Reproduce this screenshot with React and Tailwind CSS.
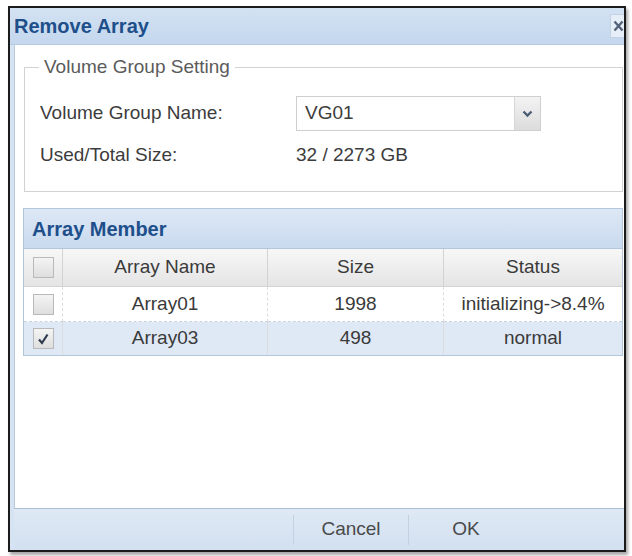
import React from 'react';

const rows = [
  { name: 'Array01', size: '1998', status: 'initializing->8.4%', checked: false },
  { name: 'Array03', size: '498', status: 'normal', checked: true },
];

function CheckBox({ checked }) {
  return (
    <div className="w-[21px] h-[21px] border border-[#b9b9b9] bg-gradient-to-b from-[#f4f4f4] to-[#dedede] flex items-center justify-center">
      {checked && (
        <svg width="14" height="14" viewBox="0 0 14 14">
          <path d="M3 7.5 L6 11 L11.5 2.5" fill="none" stroke="#2f3b4f" strokeWidth="2.2" />
        </svg>
      )}
    </div>
  );
}

export default function App() {
  return (
    <div className="w-[632px] h-[556px] bg-white pt-[6px] pl-[8px] font-['Liberation_Sans',Arial,sans-serif]">
      <div className="w-[618px] h-[546px] border-2 border-[#1c1c1c] shadow-[2px_3px_3px_rgba(0,0,0,0.35)] flex flex-col bg-[#d6e3f2] overflow-hidden">
        {/* title bar */}
        <div className="h-[37px] shrink-0 flex items-center pl-[4px] bg-gradient-to-b from-[#d3e2f3] to-[#c4d7ed] border-b border-[#b7cbe2]">
          <span className="text-[20px] font-bold text-[#1e4f8b]">Remove Array</span>
          <div className="ml-auto mr-[-3px] w-[17px] h-[24px] bg-[#e6eef8] border border-[#c2d2e4] flex items-center justify-center">
            <svg width="11" height="12" viewBox="0 0 11 12">
              <path d="M1.5 1.5 L9.5 10.5 M9.5 1.5 L1.5 10.5" stroke="#55647a" strokeWidth="2.4" />
            </svg>
          </div>
        </div>

        {/* body */}
        <div className="flex-1 pl-[4px] flex flex-col">
          <div className="flex-1 bg-white border-l border-[#b8c9de] flex flex-col pt-[10px]">
            <fieldset className="ml-[9px] mr-[1px] border border-[#d2d2d2] px-[15px] h-[137px]">
              <legend className="ml-[-1px] px-[5px] text-[19px] text-[#5b5b5b] leading-[24px]">Volume Group Setting</legend>
              <div className="flex items-center mt-[17px] h-[35px] text-[19px] text-[#3c3c3c]">
                <span className="w-[256px]">Volume Group Name:</span>
                <div className="w-[245px] h-[35px] border border-[#cfcfcf] flex">
                  <div className="flex-1 flex items-center pl-[8px] bg-white">VG01</div>
                  <div className="w-[26px] border-l border-[#d6d6d6] bg-gradient-to-b from-[#f3f3f3] to-[#dcdcdc] flex items-center justify-center">
                    <svg width="11" height="8" viewBox="0 0 11 8">
                      <path d="M1.5 1.5 L5.5 5.5 L9.5 1.5" fill="none" stroke="#4b5d77" strokeWidth="2.4" />
                    </svg>
                  </div>
                </div>
              </div>
              <div className="flex items-center mt-[9px] h-[30px] text-[19px] text-[#3c3c3c]">
                <span className="w-[256px]">Used/Total Size:</span>
                <span>32 / 2273 GB</span>
              </div>
            </fieldset>

            <div className="ml-[8px] mr-[1px] mt-[16px] border border-[#b3c6dc]">
              <div className="h-[40px] flex items-center pl-[8px] bg-gradient-to-b from-[#dde8f6] to-[#c9daee] border-b border-[#b3c6dc]">
                <span className="text-[20px] font-bold text-[#1e4f8b]">Array Member</span>
              </div>
              <div className="grid grid-cols-[39px_205px_176px_1fr] text-[19px] text-[#3a3a3a]">
                <div className="h-[38px] flex items-center justify-center bg-gradient-to-b from-[#f7f7f7] to-[#e5e5e5] border-b border-r border-[#d3d3d3]">
                  <CheckBox />
                </div>
                <div className="h-[38px] flex items-center justify-center bg-gradient-to-b from-[#f7f7f7] to-[#e5e5e5] border-b border-r border-[#d3d3d3]">Array Name</div>
                <div className="h-[38px] flex items-center justify-center bg-gradient-to-b from-[#f7f7f7] to-[#e5e5e5] border-b border-r border-[#d3d3d3]">Size</div>
                <div className="h-[38px] flex items-center justify-center bg-gradient-to-b from-[#f7f7f7] to-[#e5e5e5] border-b border-[#d3d3d3]">Status</div>
                {rows.map((r, i) => {
                  const bg = r.checked ? 'bg-[#dfe8f5]' : 'bg-white';
                  const h = i === 0 ? 'h-[35px]' : 'h-[33px]';
                  const bb = i === 0 ? 'border-b border-dashed border-[#c9d3df]' : '';
                  return (
                    <React.Fragment key={r.name}>
                      <div className={`${h} ${bg} ${bb} flex items-center justify-center border-r border-r-[#dcdcdc]`}>
                        <CheckBox checked={r.checked} />
                      </div>
                      <div className={`${h} ${bg} ${bb} flex items-center justify-center border-r border-r-[#dcdcdc]`}>{r.name}</div>
                      <div className={`${h} ${bg} ${bb} flex items-center justify-center border-r border-r-[#dcdcdc]`}>{r.size}</div>
                      <div className={`${h} ${bg} ${bb} flex items-center justify-center`}>{r.status}</div>
                    </React.Fragment>
                  );
                })}
              </div>
            </div>
          </div>

          {/* footer */}
          <div className="h-[42px] shrink-0 border-t border-[#a9bdd4] bg-gradient-to-b from-[#dfe9f5] to-[#d2e0f0] flex items-center text-[19px] text-[#4a4a4a]">
            <div className="w-[279px]" />
            <div className="w-[115px] h-[30px] border-l border-[#c3d2e3] flex items-center justify-center">Cancel</div>
            <div className="w-[115px] h-[30px] border-l border-[#c3d2e3] flex items-center justify-center">OK</div>
          </div>
        </div>
      </div>
    </div>
  );
}
